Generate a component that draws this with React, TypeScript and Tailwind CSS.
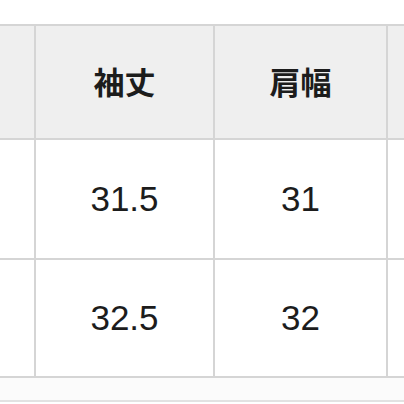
const headers = ["", "袖丈", "肩幅", ""];
const rows = [
  ["", "31.5", "31", ""],
  ["", "32.5", "32", ""],
];

export default function App() {
  return (
    <div className="w-[404px] h-[404px] bg-white overflow-hidden flex flex-col" style={{ fontFamily: '"Liberation Sans", "Noto Sans CJK JP", sans-serif' }}>
      <div className="h-[24px] bg-white" />
      <div className="grid grid-cols-[34px_177px_171px_1fr] grid-rows-[112px_118px_116px] gap-[2px] py-[2px] bg-[#d5d5d5]">
        {headers.map((h, i) => (
          <div
            key={`h${i}`}
            className="bg-[#efefef] flex items-center justify-center text-[31px] font-bold text-[#1c1c1c] pb-[2px]"
            style={{ fontFamily: '"Noto Sans CJK JP", sans-serif' }}
          >
            {h}
          </div>
        ))}
        {rows.flatMap((r, ri) =>
          r.map((c, ci) => (
            <div key={`r${ri}-${ci}`} className="bg-white flex items-center justify-center text-[35px] text-[#1c1c1c]">
              {c}
            </div>
          ))
        )}
      </div>
      <div className="h-[24px] bg-[#fbfbfb] border-b-2 border-[#e2e2e2]" />
    </div>
  );
}
